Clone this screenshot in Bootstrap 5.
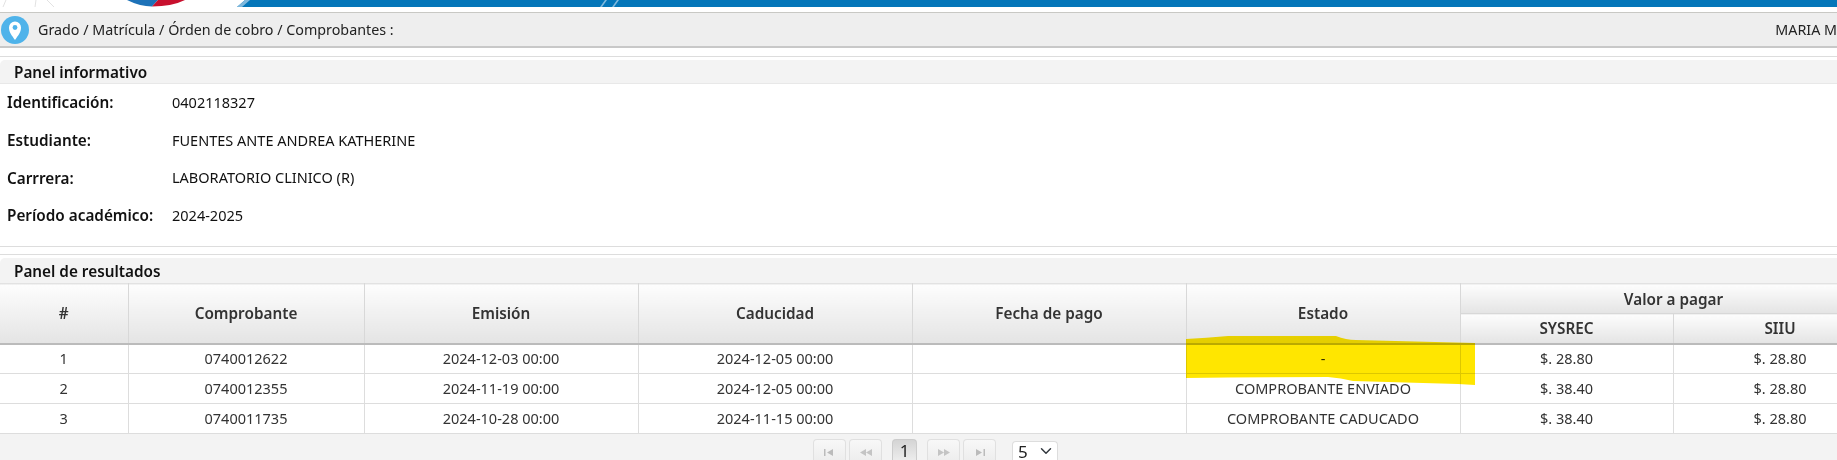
<!DOCTYPE html>
<html lang="es"><head><meta charset="utf-8"><title>Comprobantes</title>
<link href="https://cdn.jsdelivr.net/npm/bootstrap@5.3.0/dist/css/bootstrap.min.css" rel="stylesheet">
<style>
html,body{height:460px;overflow:hidden;background:#fff}
body{font-family:"Noto Sans","Open Sans",sans-serif;font-size:14.5px;color:#222;width:1837px}
.topstrip{height:12px;display:block}
.crumbbar{height:36px;background:#eee;border-top:1px solid #c8c8c4;border-bottom:2px solid #c8c8c8;padding-left:1px;font-size:14.3px}
.crumbicon{width:28px;height:28px;margin-right:9px;flex:none}
.paneltop{border-top:1px solid #ddd;margin-top:8px;padding-top:3px}
.paneltop.second{margin-top:7px}
.panelhead{background:#f3f3f3;height:24px;border-bottom:1px solid #e8e8e8;padding-left:14px;font-weight:600;font-size:15.3px;color:#111;line-height:24px;border-top-left-radius:5px}
.second .panelhead{height:25px;border-bottom:0;line-height:26px}
.infosec{height:163px;border-bottom:1px solid #ddd}
.inforow{height:37.7px;padding-left:7px;color:#111}
.infolabel{width:165px;font-weight:600;font-size:15.3px}
.tablewrap{background:#f3f3f3;height:177px;position:relative;overflow:hidden}
.gridtbl.table{table-layout:fixed;width:1887px;max-width:none;border-collapse:collapse;background:#fff;text-align:center;color:#333;margin:0}
.gridtbl .c0{width:128px}.gridtbl .c1{width:236px}.gridtbl .c2{width:274px}.gridtbl .c3{width:213px}.gridtbl .c4{width:214px}
.gridtbl.table th{font-weight:600;font-size:15.3px;background:linear-gradient(#fdfdfd,#e4e4e4);border:1px solid #d8d8d8;border-top-color:#e2e2e2;padding:1px 0 0;vertical-align:middle;color:#333;box-shadow:none}
.gridtbl.table thead tr:last-child th,.gridtbl.table th.tall{border-bottom:2px solid #bbb}
.gridtbl.table td{height:30px;padding:1px 0 0;border:1px solid #ddd;vertical-align:middle;color:#333;box-shadow:none}
.gridtbl.table .headrow{height:30px}
.gridtbl.table th:first-child,.gridtbl.table td:first-child{border-left:0}
.markover{position:absolute;left:1186px;top:53px;width:289px;height:50px;pointer-events:none;mix-blend-mode:multiply}
.pager{padding-top:5px;padding-left:813px}
.pagebtn{height:21px;width:33px;border:1px solid #e0e0e0;border-bottom:0;border-radius:4px 4px 0 0;background:linear-gradient(#f8f8f8,#eeeeee);margin-right:3px;flex:none;padding-top:5px}
.pagebtn.current{width:25px;background:linear-gradient(#d4d4d4,#ececec);border-color:#ccc;margin:0 10px 0 7px;font-size:17px;line-height:1;padding-top:2px;color:#222}
.pagebtn.fourth{margin-right:1px}
.gridsel.form-select{width:46px;height:19px;margin-top:2px;border:1px solid #ddd;border-bottom:0;border-radius:4px 4px 0 0;margin-left:15px;font-size:17px;line-height:1;padding:0 0 0 5px;color:#222;font-family:inherit;flex:none;background-position:right 3px center;box-shadow:none}
</style></head><body>
<svg class="topstrip" width="1837" height="12" viewBox="0 0 1837 12" aria-hidden="true">
<path d="M237 7l8-7h1592v7z" fill="#0476b9"/>
<path d="M237 7l8-7h5l-8 7zM600 7l5-7h2l-5 7zM612 7l5-7h2l-5 7z" fill="#7fb8dc"/>
<path d="M127 0Q140 6.500 152 6.500L158 0z" fill="#1d72b8"/><path d="M152 6.500Q172 6.500 185 0H158z" fill="#c8102e"/>
<path d="M3 7l3-7M35 7l1-7M47 0l7 7" stroke="#e2e2e2" fill="none"/>
</svg>
<div class="crumbbar d-flex align-items-center">
<svg class="crumbicon" viewBox="0 0 28 28" aria-hidden="true"><circle cx="14" cy="14" r="14" fill="#4fb3ea"/><path d="M14 24c-3-4.500-6-7.500-6-12.500a6 6 0 0 1 12 0c0 5-3 8-6 12.500z" fill="#fff"/><circle cx="14" cy="11.500" r="2.400" fill="#4fb3ea"/></svg>
<span>Grado / Matrícula / Órden de cobro / Comprobantes :</span>
<span class="ms-auto text-nowrap">MARIA M</span>
</div>
<div class="paneltop">
<div class="panelhead">Panel informativo</div>
<div class="infosec">
<div class="inforow d-flex align-items-center"><div class="infolabel">Identificación:</div><div>0402118327</div></div>
<div class="inforow d-flex align-items-center"><div class="infolabel">Estudiante:</div><div>FUENTES ANTE ANDREA KATHERINE</div></div>
<div class="inforow d-flex align-items-center"><div class="infolabel">Carrrera:</div><div>LABORATORIO CLINICO (R)</div></div>
<div class="inforow d-flex align-items-center"><div class="infolabel">Período académico:</div><div>2024-2025</div></div>
</div>
</div>
<div class="paneltop second">
<div class="panelhead">Panel de resultados</div>
<div class="tablewrap">
<table class="table gridtbl">
<colgroup><col class="c0"><col class="c1"><col class="c2"><col class="c2"><col class="c2"><col class="c2"><col class="c3"><col class="c4"></colgroup>
<thead>
<tr class="headrow"><th rowspan="2" class="tall">#</th><th rowspan="2" class="tall">Comprobante</th><th rowspan="2" class="tall">Emisión</th><th rowspan="2" class="tall">Caducidad</th><th rowspan="2" class="tall">Fecha de pago</th><th rowspan="2" class="tall">Estado</th><th colspan="2">Valor a pagar</th></tr>
<tr class="headrow"><th>SYSREC</th><th>SIIU</th></tr>
</thead>
<tbody>
<tr><td>1</td><td>0740012622</td><td>2024-12-03 00:00</td><td>2024-12-05 00:00</td><td></td><td>-</td><td>$. 28.80</td><td>$. 28.80</td></tr>
<tr><td>2</td><td>0740012355</td><td>2024-11-19 00:00</td><td>2024-12-05 00:00</td><td></td><td>COMPROBANTE ENVIADO</td><td>$. 38.40</td><td>$. 28.80</td></tr>
<tr><td>3</td><td>0740011735</td><td>2024-10-28 00:00</td><td>2024-11-15 00:00</td><td></td><td>COMPROBANTE CADUCADO</td><td>$. 38.40</td><td>$. 28.80</td></tr>
</tbody>
</table>
<svg class="markover" viewBox="0 0 289 50" aria-hidden="true"><path d="M0 3Q20 2 42 0L150 0Q160 4 170 4L289 7V49L272 48L167 45Q155 42 142 41L42 41.500L0 42Z" fill="#ffe600"/></svg>
<div class="pager d-flex align-items-start">
<div class="pagebtn d-flex align-items-center justify-content-center"><svg width="11" height="7" viewBox="0 0 11 7" aria-hidden="true"><path d="M0 0h1.500v7H0zM9 0v7L3 3.500z" fill="#bbb"/></svg></div>
<div class="pagebtn d-flex align-items-center justify-content-center"><svg width="12" height="7" viewBox="0 0 12 7" aria-hidden="true"><path d="M6 0v7L0 3.500zM12 0v7L6 3.500z" fill="#c4c4c4"/></svg></div>
<div class="pagebtn current d-flex align-items-start justify-content-center">1</div>
<div class="pagebtn d-flex align-items-center justify-content-center"><svg width="12" height="7" viewBox="0 0 12 7" aria-hidden="true"><path d="M0 0v7l6-3.500zM6 0v7l6-3.500z" fill="#c4c4c4"/></svg></div>
<div class="pagebtn fourth d-flex align-items-center justify-content-center"><svg width="11" height="7" viewBox="0 0 11 7" aria-hidden="true"><path d="M2 0v7l6-3.500zM9.500 0H11v7H9.500z" fill="#bbb"/></svg></div>
<select class="form-select gridsel" aria-label="Filas"><option>5</option></select>
</div>
</div>
</div>
<script src="https://cdn.jsdelivr.net/npm/bootstrap@5.3.0/dist/js/bootstrap.bundle.min.js"></script>
</body></html>
